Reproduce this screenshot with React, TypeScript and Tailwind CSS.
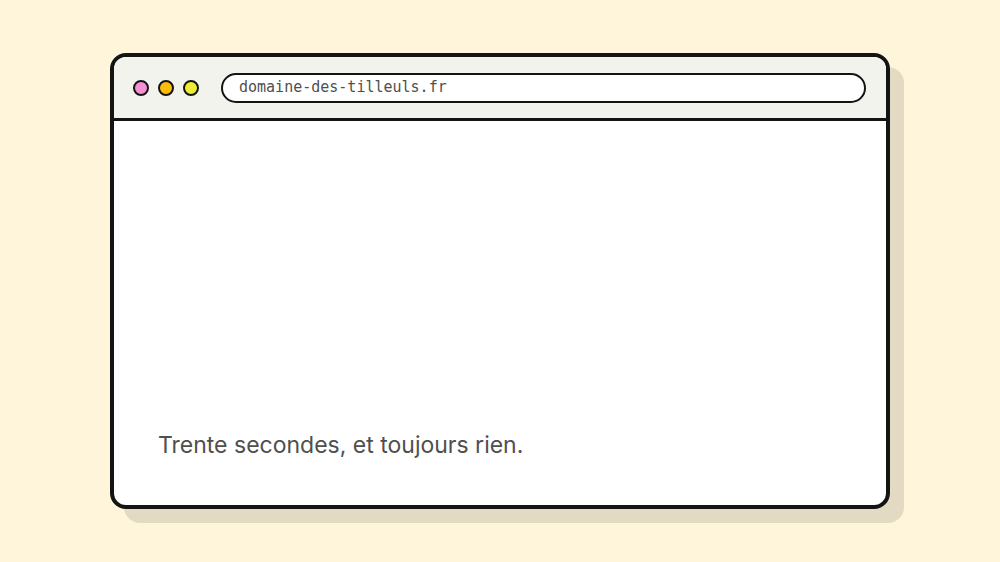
export default function App() {
  return (
    <div className="flex h-screen w-full items-center justify-center bg-[#fef5da]">
      <div className="relative h-[456px] w-[780px]">
        <div className="absolute left-[14px] top-[14px] h-full w-full rounded-[16px] bg-[#e2dac2]" />
        <div className="relative flex h-full w-full flex-col overflow-hidden rounded-[16px] border-4 border-[#141414] bg-white">
          <div className="flex h-[64px] shrink-0 items-center gap-[22px] border-b-[3px] border-[#141414] bg-[#f3f3ee] pl-[19px] pr-5">
            <div className="flex items-center gap-[9px]">
              <span className="h-[16px] w-[16px] rounded-full border-2 border-[#141414] bg-[#f78fd6]" />
              <span className="h-[16px] w-[16px] rounded-full border-2 border-[#141414] bg-[#fbbd0a]" />
              <span className="h-[16px] w-[16px] rounded-full border-2 border-[#141414] bg-[#eeec35]" />
            </div>
            <div className="flex h-[30px] flex-1 items-center rounded-full border-2 border-[#141414] bg-white px-4">
              <span className="font-['DejaVu_Sans_Mono',monospace] text-[15px] text-[#4f4f4f]">
                domaine-des-tilleuls.fr
              </span>
            </div>
          </div>
          <div className="flex flex-1 flex-col justify-end px-[44px] pb-[45px]">
            <p className="font-['Inter',sans-serif] text-[23px] leading-[30px] text-[#4f4f4f]">
              Trente secondes, et toujours rien.
            </p>
          </div>
        </div>
      </div>
    </div>
  );
}
